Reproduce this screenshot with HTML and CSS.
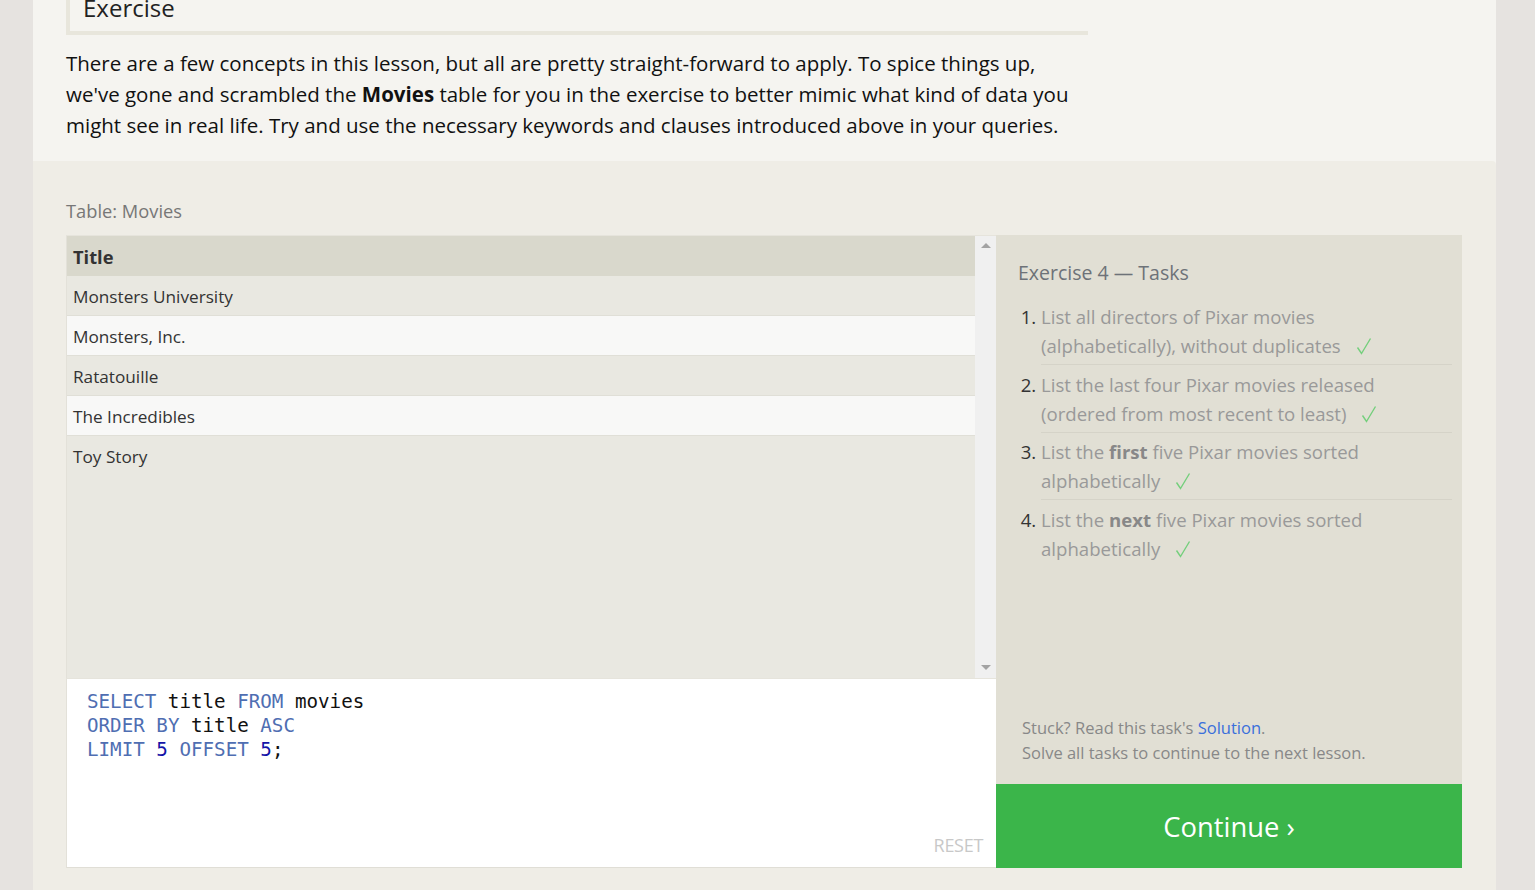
FILE: index.html
```html
<!DOCTYPE html>
<html>
<head>
<meta charset="utf-8">
<link rel="stylesheet" href="styles.css">
</head>
<body>
<div class="page">
  <div class="intro">
    <div class="heading-box"><h2 class="heading">Exercise</h2></div>
    <p class="lead">There are a few concepts in this lesson, but all are pretty straight-forward to apply. To spice things up, we've gone and scrambled the <strong>Movies</strong> table for you in the exercise to better mimic what kind of data you might see in real life. Try and use the necessary keywords and clauses introduced above in your queries.</p>
  </div>
  <div class="exercise">
    <div class="table-label">Table: Movies</div>
    <div class="workspace">
      <div class="left-col">
        <div class="table-wrap">
          <div class="table-scroll">
            <table class="results">
              <thead><tr><th>Title</th></tr></thead>
              <tbody>
                <tr class="odd"><td>Monsters University</td></tr>
                <tr class="even"><td>Monsters, Inc.</td></tr>
                <tr class="odd"><td>Ratatouille</td></tr>
                <tr class="even"><td>The Incredibles</td></tr>
                <tr class="odd last"><td>Toy Story</td></tr>
              </tbody>
            </table>
          </div>
          <div class="scrollbar">
            <span class="arrow-up"></span>
            <span class="arrow-down"></span>
          </div>
        </div>
        <div class="editor">
          <pre class="code"><span class="kw">SELECT</span> title <span class="kw">FROM</span> movies
<span class="kw">ORDER</span> <span class="kw">BY</span> title <span class="kw">ASC</span>
<span class="kw">LIMIT</span> <span class="num">5</span> <span class="kw">OFFSET</span> <span class="num">5</span>;</pre>
          <span class="reset">RESET</span>
        </div>
      </div>
      <div class="right-col">
        <div class="tasks">
          <div class="tasks-title">Exercise 4 — Tasks</div>
          <ol class="task-list">
            <li>List all directors of Pixar movies (alphabetically), without duplicates <svg class="check" width="16" height="18" viewBox="0 0 16 18"><path d="M1.5 10.5 L5.5 16.5 L14.5 1.5" fill="none" stroke="#74cf7c" stroke-width="1.4"/></svg></li>
            <li>List the last four Pixar movies released (ordered from most recent to least) <svg class="check" width="16" height="18" viewBox="0 0 16 18"><path d="M1.5 10.5 L5.5 16.5 L14.5 1.5" fill="none" stroke="#74cf7c" stroke-width="1.4"/></svg></li>
            <li>List the <b>first</b> five Pixar movies sorted alphabetically <svg class="check" width="16" height="18" viewBox="0 0 16 18"><path d="M1.5 10.5 L5.5 16.5 L14.5 1.5" fill="none" stroke="#74cf7c" stroke-width="1.4"/></svg></li>
            <li class="last">List the <b>next</b> five Pixar movies sorted alphabetically <svg class="check" width="16" height="18" viewBox="0 0 16 18"><path d="M1.5 10.5 L5.5 16.5 L14.5 1.5" fill="none" stroke="#74cf7c" stroke-width="1.4"/></svg></li>
          </ol>
        </div>
        <div class="stuck">
          <div>Stuck? Read this task's <a class="solution">Solution</a>.</div>
          <div>Solve all tasks to continue to the next lesson.</div>
        </div>
        <div class="continue">Continue ›</div>
      </div>
    </div>
  </div>
</div>
</body>
</html>
```

FILE: styles.css
```css
html, body {
  margin: 0;
  padding: 0;
}
body {
  background: #e6e3e0;
  font-family: "Open Sans", "Noto Sans", sans-serif;
  overflow: hidden;
  height: 890px;
}
.page {
  margin-left: 33px;
  width: 1463px;
  background: #f5f4f0;
}
.intro {
  padding: 0 33px 20px 33px;
}
.heading-box {
  width: 1022px;
  box-sizing: border-box;
  margin-top: -6px;
  border-left: 4px solid #e8e6dc;
  border-bottom: 4px solid #e8e6dc;
  padding: 0 0 9px 13px;
}
.heading {
  margin: 0;
  font-size: 24px;
  font-weight: 400;
  line-height: 28px;
  color: #222;
}
.lead {
  margin: 13px 0 0 0;
  width: 1022px;
  font-size: 20.5px;
  line-height: 31px;
  color: #111;
}
.lead strong {
  font-weight: 700;
}
.exercise {
  background: #efede6;
  padding: 38px 34px 22px 33px;
  border-top-right-radius: 4px;
}
.table-label {
  font-size: 18.3px;
  line-height: 24px;
  color: #777;
  margin-bottom: 12px;
}
.workspace {
  display: flex;
  align-items: stretch;
}
.left-col {
  width: 930px;
  display: flex;
  flex-direction: column;
}
.table-wrap {
  height: 443px;
  display: flex;
  background: #e9e8e1;
  border-top: 1px solid #e6e4dc;
  border-left: 1px solid #e3e1d9;
  box-sizing: border-box;
}
.table-scroll {
  flex: 1;
}
.results {
  width: 100%;
  border-collapse: collapse;
  font-size: 17.2px;
  color: #333;
}
.results th {
  text-align: left;
  background: #d9d8cc;
  height: 40px;
  padding: 0 6px;
  box-sizing: border-box;
  font-size: 18.3px;
  font-weight: 700;
  color: #333;
}
.results td {
  height: 38px;
  padding: 1px 6px 0 6px;
  border-bottom: 1px solid #e0dfd7;
}
.results tr.odd td {
  background: #e9e8e1;
}
.results tr.even td {
  background: #f8f8f7;
}
.results tr.last td {
  border-bottom: none;
}
.scrollbar {
  width: 21px;
  background: #f0f0f0;
  display: flex;
  flex-direction: column;
  justify-content: space-between;
  align-items: center;
  padding: 7px 0 8px 0;
}
.arrow-up {
  width: 0;
  height: 0;
  border-left: 5px solid transparent;
  border-right: 5px solid transparent;
  border-bottom: 5px solid #a3a3a3;
}
.arrow-down {
  width: 0;
  height: 0;
  border-left: 5px solid transparent;
  border-right: 5px solid transparent;
  border-top: 5px solid #a3a3a3;
}
.editor {
  position: relative;
  height: 190px;
  background: #fff;
  border-left: 1px solid #e3e1d9;
  border-bottom: 1px solid #e0ded6;
  border-top: 1px solid #e6e4dc;
  box-sizing: border-box;
}
.code {
  margin: 0;
  padding: 11px 20px 10px 20px;
  font-family: "DejaVu Sans Mono", "Liberation Mono", monospace;
  font-size: 19.2px;
  line-height: 24px;
  color: #111;
}
.kw {
  color: #4f6eb2;
}
.num {
  color: #1414a8;
}
.reset {
  position: absolute;
  right: 13px;
  bottom: 10px;
  font-size: 18px;
  color: #c8c8c8;
  letter-spacing: -0.3px;
}
.right-col {
  width: 466px;
  display: flex;
  flex-direction: column;
  background: #e1dfd4;
}
.tasks {
  flex: 1;
  padding: 24px 10px 0 0;
}
.tasks-title {
  padding-left: 22px;
  font-size: 19.5px;
  line-height: 28px;
  color: #6d7278;
}
.task-list {
  margin: 15px 0 0 0;
  padding-left: 45px;
  font-size: 18.6px;
  line-height: 29px;
  color: #999;
}
.task-list li {
  padding: 0 20px 4px 0;
  margin-bottom: 4.5px;
  border-bottom: 1px solid #d5d3c8;
}
.task-list li.last {
  border-bottom: none;
}
.task-list li::marker {
  color: #333;
}
.task-list b {
  color: #888;
}
.check {
  margin-left: 10px;
  vertical-align: -2px;
}
.stuck {
  padding: 0 20px 19px 26px;
  font-size: 16.5px;
  line-height: 25px;
  color: #888;
}
.solution {
  color: #3a6fdb;
}
.continue {
  height: 84px;
  background: #3bb54a;
  color: #fff;
  font-size: 27.4px;
  display: flex;
  align-items: center;
  justify-content: center;
}
```
